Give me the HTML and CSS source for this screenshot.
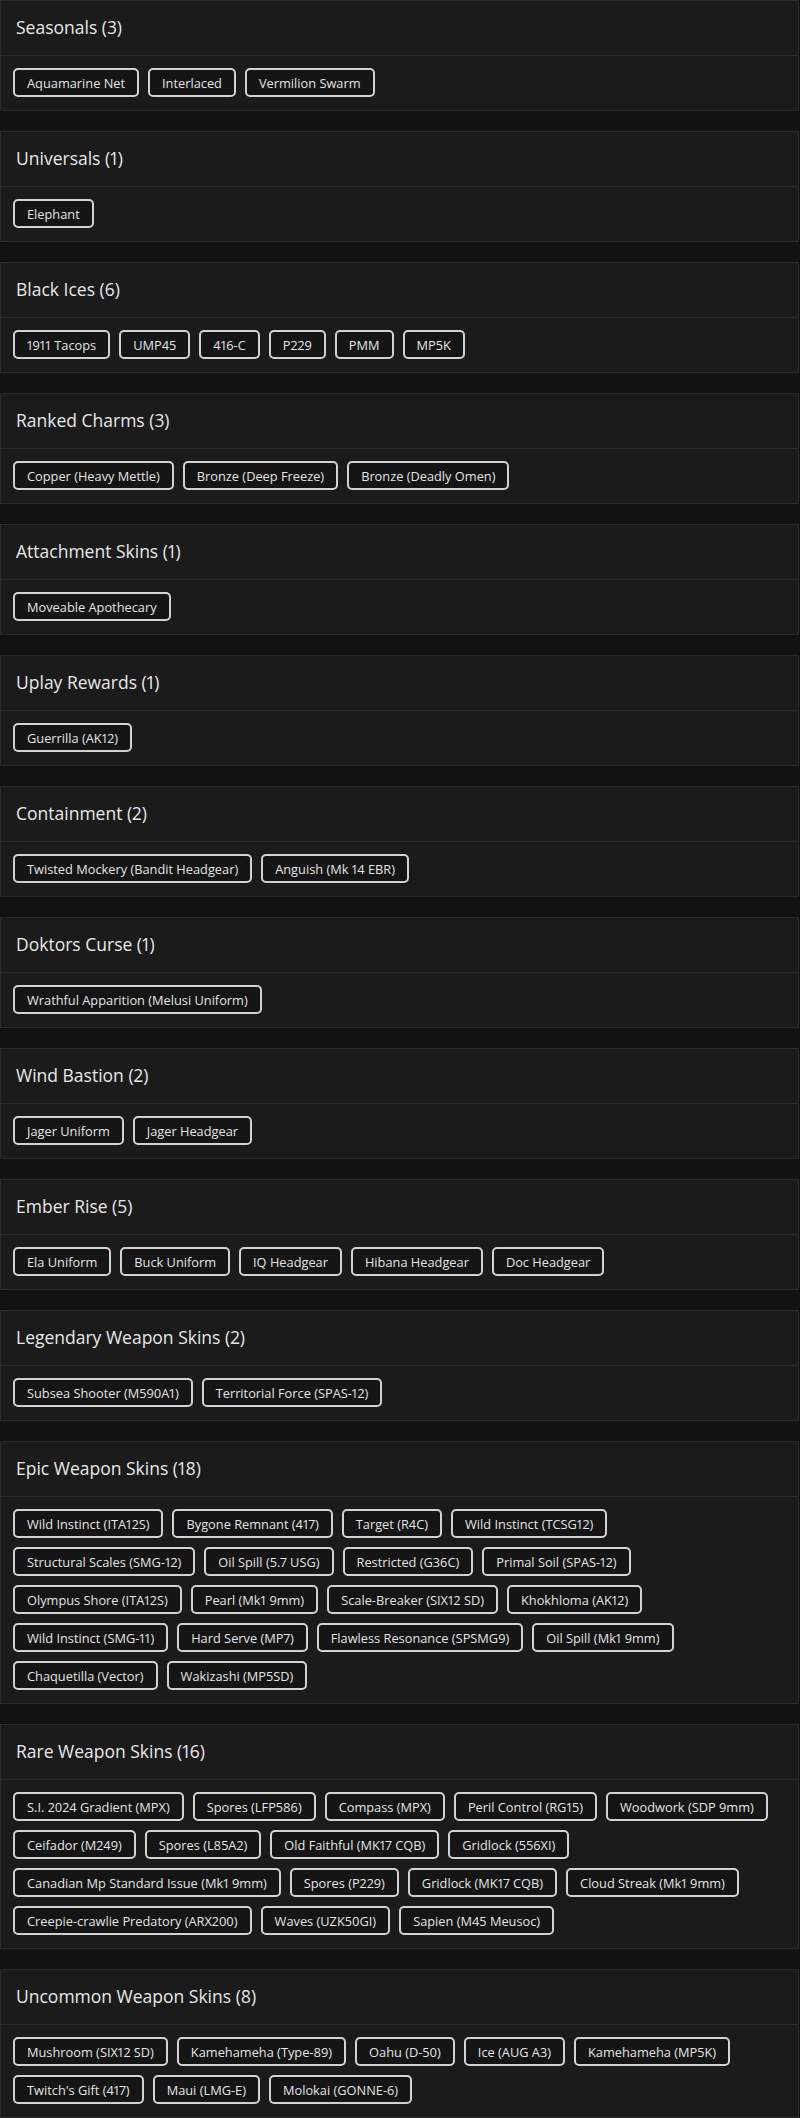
FILE: index.html
```html
<!DOCTYPE html>
<html lang="en">
<head>
<meta charset="utf-8">
<title>Collection</title>
<link rel="stylesheet" href="styles.css">
</head>
<body>
<main class="list">
  <section class="group">
    <header class="group-head"><h2 class="group-title">Seasonals (3)</h2></header>
    <div class="group-body">
      <span class="tag">Aquamarine Net</span><span class="tag">Interlaced</span><span class="tag">Vermilion Swarm</span>
    </div>
  </section>
  <section class="group">
    <header class="group-head"><h2 class="group-title">Universals (1)</h2></header>
    <div class="group-body">
      <span class="tag">Elephant</span>
    </div>
  </section>
  <section class="group">
    <header class="group-head"><h2 class="group-title">Black Ices (6)</h2></header>
    <div class="group-body">
      <span class="tag">1911 Tacops</span><span class="tag">UMP45</span><span class="tag">416-C</span><span class="tag">P229</span><span class="tag">PMM</span><span class="tag">MP5K</span>
    </div>
  </section>
  <section class="group">
    <header class="group-head"><h2 class="group-title">Ranked Charms (3)</h2></header>
    <div class="group-body">
      <span class="tag">Copper (Heavy Mettle)</span><span class="tag">Bronze (Deep Freeze)</span><span class="tag">Bronze (Deadly Omen)</span>
    </div>
  </section>
  <section class="group">
    <header class="group-head"><h2 class="group-title">Attachment Skins (1)</h2></header>
    <div class="group-body">
      <span class="tag">Moveable Apothecary</span>
    </div>
  </section>
  <section class="group">
    <header class="group-head"><h2 class="group-title">Uplay Rewards (1)</h2></header>
    <div class="group-body">
      <span class="tag">Guerrilla (AK12)</span>
    </div>
  </section>
  <section class="group">
    <header class="group-head"><h2 class="group-title">Containment (2)</h2></header>
    <div class="group-body">
      <span class="tag">Twisted Mockery (Bandit Headgear)</span><span class="tag">Anguish (Mk 14 EBR)</span>
    </div>
  </section>
  <section class="group">
    <header class="group-head"><h2 class="group-title">Doktors Curse (1)</h2></header>
    <div class="group-body">
      <span class="tag">Wrathful Apparition (Melusi Uniform)</span>
    </div>
  </section>
  <section class="group">
    <header class="group-head"><h2 class="group-title">Wind Bastion (2)</h2></header>
    <div class="group-body">
      <span class="tag">Jager Uniform</span><span class="tag">Jager Headgear</span>
    </div>
  </section>
  <section class="group">
    <header class="group-head"><h2 class="group-title">Ember Rise (5)</h2></header>
    <div class="group-body">
      <span class="tag">Ela Uniform</span><span class="tag">Buck Uniform</span><span class="tag">IQ Headgear</span><span class="tag">Hibana Headgear</span><span class="tag">Doc Headgear</span>
    </div>
  </section>
  <section class="group">
    <header class="group-head"><h2 class="group-title">Legendary Weapon Skins (2)</h2></header>
    <div class="group-body">
      <span class="tag">Subsea Shooter (M590A1)</span><span class="tag">Territorial Force (SPAS-12)</span>
    </div>
  </section>
  <section class="group">
    <header class="group-head"><h2 class="group-title">Epic Weapon Skins (18)</h2></header>
    <div class="group-body">
      <span class="tag">Wild Instinct (ITA12S)</span><span class="tag">Bygone Remnant (417)</span><span class="tag">Target (R4C)</span><span class="tag">Wild Instinct (TCSG12)</span><span class="tag">Structural Scales (SMG-12)</span><span class="tag">Oil Spill (5.7 USG)</span><span class="tag">Restricted (G36C)</span><span class="tag">Primal Soil (SPAS-12)</span><span class="tag">Olympus Shore (ITA12S)</span><span class="tag">Pearl (Mk1 9mm)</span><span class="tag">Scale-Breaker (SIX12 SD)</span><span class="tag">Khokhloma (AK12)</span><span class="tag">Wild Instinct (SMG-11)</span><span class="tag">Hard Serve (MP7)</span><span class="tag">Flawless Resonance (SPSMG9)</span><span class="tag">Oil Spill (Mk1 9mm)</span><span class="tag">Chaquetilla (Vector)</span><span class="tag">Wakizashi (MP5SD)</span>
    </div>
  </section>
  <section class="group">
    <header class="group-head"><h2 class="group-title">Rare Weapon Skins (16)</h2></header>
    <div class="group-body">
      <span class="tag">S.I. 2024 Gradient (MPX)</span><span class="tag">Spores (LFP586)</span><span class="tag">Compass (MPX)</span><span class="tag">Peril Control (RG15)</span><span class="tag">Woodwork (SDP 9mm)</span><span class="tag">Ceifador (M249)</span><span class="tag">Spores (L85A2)</span><span class="tag">Old Faithful (MK17 CQB)</span><span class="tag">Gridlock (556XI)</span><span class="tag">Canadian Mp Standard Issue (Mk1 9mm)</span><span class="tag">Spores (P229)</span><span class="tag">Gridlock (MK17 CQB)</span><span class="tag">Cloud Streak (Mk1 9mm)</span><span class="tag">Creepie-crawlie Predatory (ARX200)</span><span class="tag">Waves (UZK50GI)</span><span class="tag">Sapien (M45 Meusoc)</span>
    </div>
  </section>
  <section class="group">
    <header class="group-head"><h2 class="group-title">Uncommon Weapon Skins (8)</h2></header>
    <div class="group-body">
      <span class="tag">Mushroom (SIX12 SD)</span><span class="tag">Kamehameha (Type-89)</span><span class="tag">Oahu (D-50)</span><span class="tag">Ice (AUG A3)</span><span class="tag">Kamehameha (MP5K)</span><span class="tag">Twitch's Gift (417)</span><span class="tag">Maui (LMG-E)</span><span class="tag">Molokai (GONNE-6)</span>
    </div>
  </section>
</main>
</body>
</html>
```

FILE: styles.css
```css
html, body {
  margin: 0;
  padding: 0;
  background: #121212;
}

body {
  font-family: "Open Sans", "Liberation Sans", sans-serif;
  color: #e6e6e6;
  font-variant-numeric: proportional-nums;
}

.list {
  display: flex;
  flex-direction: column;
  gap: 20px;
  padding-right: 1px;
}

.group {
  background: #1b1b1b;
  border: 1px solid #2b2b2b;
}

.group-head {
  height: 54px;
  display: flex;
  align-items: center;
  padding: 0 15px;
  border-bottom: 1px solid #2b2b2b;
}

.group-title {
  margin: 0;
  font-size: 17.5px;
  font-weight: 500;
  color: #e8e8e8;
  line-height: 1;
}

.group-body {
  display: flex;
  flex-wrap: wrap;
  gap: 9px;
  padding: 12px 12px 13px;
}

.tag {
  display: inline-flex;
  align-items: center;
  box-sizing: border-box;
  height: 29px;
  padding: 0 12px;
  border: 2px solid #d2d2d2;
  border-radius: 5px;
  background: #151515;
  font-size: 12.8px;
  color: #e4e4e4;
  white-space: nowrap;
  font-variant-numeric: proportional-nums;
}
```
